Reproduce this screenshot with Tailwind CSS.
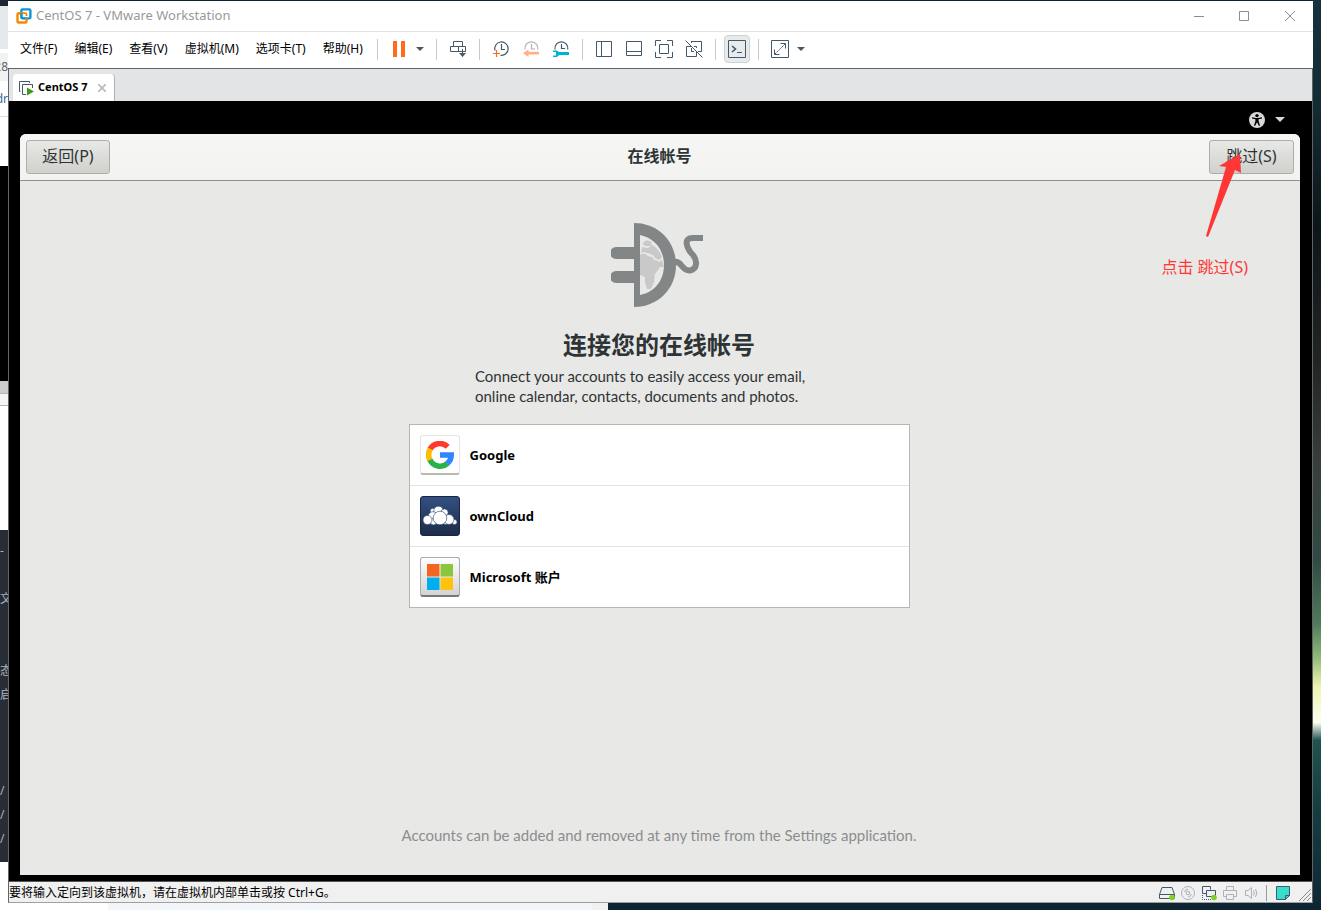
<!DOCTYPE html>
<html lang="zh-CN">
<head>
  <meta charset="UTF-8" />
  <meta name="viewport" content="width=device-width, initial-scale=1" />
  <title>CentOS 7 - VMware Workstation</title>
  <script src="https://cdn.jsdelivr.net/npm/@tailwindcss/browser@4"></script>
</head>
<body class="h-screen overflow-hidden flex flex-col bg-[#0e2430] font-['Noto_Sans','Noto_Sans_CJK_SC',sans-serif] text-xs text-black">

  <div class="flex-1 min-h-0 flex">
    <!-- Windows behind, left edge -->
    <div class="w-2 shrink-0 flex flex-col overflow-hidden bg-white whitespace-nowrap">
      <div class="h-1.5 shrink-0 bg-[#1c2733]"></div>
      <div class="h-[43px] shrink-0 bg-[#e4e9ec]"></div>
      <div class="h-1 shrink-0"></div>
      <div class="h-7 shrink-0 flex justify-end items-center bg-[#f1f3f3] text-xs text-[#5f6368]">28</div>
      <div class="h-9 shrink-0 flex justify-end items-center text-xs text-[#35699a] border-b border-[#dddddd]">dr</div>
      <div class="h-[49px] shrink-0"></div>
      <div class="h-[215px] shrink-0 bg-black"></div>
      <div class="h-3 shrink-0 bg-[#cccccc]"></div>
      <div class="h-[13px] shrink-0 bg-[#f5f5f5] border-y border-[#b4b4b4]"></div>
      <div class="h-[124px] shrink-0"></div>
      <div class="h-[332px] shrink-0 pt-[9px] bg-[#282c34] text-[#abb2bf] text-xs leading-6">
        <p>-</p><p>&nbsp;</p><p>文</p><p>&nbsp;</p><p>&nbsp;</p><p>态</p><p>启</p>
        <p>&nbsp;</p><p>&nbsp;</p><p>&nbsp;</p><p>/</p><p>/</p><p>/</p>
      </div>
    </div>

    <!-- VMware window -->
    <div class="flex-1 min-w-0 mt-px flex flex-col bg-white">
      <header class="h-[31px] shrink-0 flex items-center pl-2 border-b border-[#e3e3e3]">
        <svg class="w-4 h-4" viewBox="0 0 16 16" fill="none" stroke-width="2.4">
          <rect x="5.4" y="1.4" width="9" height="9" rx="1.2" stroke="#0c95d6" />
          <path d="M5 5.2H2.8Q1.5 5.2 1.5 6.5V13.2Q1.5 14.5 2.8 14.5H9.2Q10.5 14.5 10.5 13.2V10.5" stroke="#f38b00" />
          <path d="M4.5 5.2H9.3Q10.5 5.2 10.5 6.4V8" stroke="#f38b00" stroke-width="1.8" />
          <path d="M5.4 5V9.3Q5.4 10.4 6.5 10.4H9" stroke="#0c95d6" stroke-width="1.8" />
        </svg>
        <h1 class="ml-1 text-[13px] text-[#999999]">CentOS 7 - VMware Workstation</h1>
        <div class="ml-auto flex text-[#8d8d8d]">
          <button aria-label="最小化" class="w-[45px] h-7 grid place-items-center"><svg class="w-3 h-3" viewBox="0 0 12 12" stroke="currentColor"><path d="M1 6.5H11" /></svg></button>
          <button aria-label="最大化" class="w-[46px] h-7 grid place-items-center"><svg class="w-3 h-3" viewBox="0 0 12 12" fill="none" stroke="currentColor"><path d="M1.5 1.5H10.5V10.5H1.5Z" /></svg></button>
          <button aria-label="关闭" class="w-[46px] h-7 grid place-items-center"><svg class="w-3 h-3" viewBox="0 0 12 12" stroke="currentColor"><path d="M1 1L11 11M11 1L1 11" /></svg></button>
        </div>
      </header>

      <!-- Menu + toolbar -->
      <div class="h-9 shrink-0 pb-0.5 flex items-center whitespace-nowrap">
        <nav class="w-[369px] shrink-0 pl-3 pb-px flex gap-[17px]">
          <button>文件(F)</button>
          <button>编辑(E)</button>
          <button>查看(V)</button>
          <button>虚拟机(M)</button>
          <button>选项卡(T)</button>
          <button>帮助(H)</button>
        </nav>
        <div class="flex items-center text-[#44586a]">
          <i class="w-px h-[21px] mr-1.5 bg-[#c8c8c8]"></i>
          <button aria-label="挂起" class="w-[30px] h-7 grid place-items-center"><svg class="w-4 h-4" viewBox="0 0 16 16" fill="#ff6a1c"><path d="M2 0H6V16H2ZM10 0H14V16H10Z" /></svg></button>
          <button aria-label="电源选项" class="w-4 h-7 pr-1 grid place-items-center"><svg class="w-2 h-1" viewBox="0 0 8 4" fill="currentColor"><path d="M0 0H8L4 4Z" /></svg></button>
          <i class="w-px h-[21px] mx-1.5 bg-[#c8c8c8]"></i>
          <button aria-label="发送 Ctrl+Alt+Del" class="w-[30px] h-7 grid place-items-center">
            <svg class="w-[18px] h-[18px]" viewBox="0 0 18 18" fill="none" stroke="currentColor"><path d="M4.5 6.5V1.5H13.5V6.5M9.5 6.5V11.5M1.5 6.5H16.5V11.5H1.5ZM13.5 9V16.5" /><path d="M10 13H17L13.5 17Z" fill="currentColor" stroke="none" /></svg>
          </button>
          <i class="w-px h-[21px] mx-1.5 bg-[#c8c8c8]"></i>
          <button aria-label="拍摄快照" class="w-[30px] h-7 grid place-items-center">
            <svg class="w-[18px] h-[18px]" viewBox="0 0 18 18" fill="none" stroke="currentColor" stroke-width="1.2"><path d="M3 10.5A6.7 6.7 0 1 1 8.5 15.3M9.5 4V9.5H13" /><path d="M1 13.5H8M4.5 10V17" stroke="#ff6a1c" /></svg>
          </button>
          <button aria-label="恢复快照" class="w-[30px] h-7 grid place-items-center">
            <svg class="w-[18px] h-[18px]" viewBox="0 0 18 18" fill="none" stroke="#a9b1b9" stroke-width="1.2"><path d="M3 9.5A6.5 6.5 0 1 1 15.8 9.5M9.5 4V9H13" /><path d="M1 13.2L6.5 9.5V11.8H17V14.6H6.5V17Z" fill="#ffb088" stroke="none" /></svg>
          </button>
          <button aria-label="管理快照" class="w-[30px] h-7 grid place-items-center">
            <svg class="w-[18px] h-[18px]" viewBox="0 0 18 18" fill="none" stroke="currentColor" stroke-width="1.2"><path d="M3 9.5A6.5 6.5 0 1 1 15.8 9.5M9.5 4V8.5H13" /><path d="M1 10.5H5L7 12H17V15H7L5 17H1V15.500H4V12H1Z" fill="#00b2d6" stroke="none" /></svg>
          </button>
          <i class="w-px h-[21px] mx-1.5 bg-[#c8c8c8]"></i>
          <button aria-label="显示库" class="w-[30px] h-7 grid place-items-center"><svg class="w-4 h-4" viewBox="0 0 16 16" fill="none" stroke="currentColor"><path d="M.5 .5H15.5V15.5H.5ZM5.5 .5V15.5" /></svg></button>
          <button aria-label="显示缩略图栏" class="w-[30px] h-7 grid place-items-center"><svg class="w-4 h-4" viewBox="0 0 16 16" fill="none" stroke="currentColor"><path d="M.5 .5H15.5V14.5H.5ZM.5 10.5H15.5" /></svg></button>
          <button aria-label="全屏" class="w-[30px] h-7 grid place-items-center"><svg class="w-[18px] h-[18px]" viewBox="0 0 18 18" fill="none" stroke="currentColor"><path d="M.5 6V.5H6M12 .5H17.5V6M17.5 12V17.5H12M6 17.5H.5V12M4.5 4.5H13.5V13.5H4.5Z" /></svg></button>
          <button aria-label="Unity" class="w-[30px] h-7 grid place-items-center"><svg class="w-[18px] h-[18px]" viewBox="0 0 18 18" fill="none" stroke="currentColor"><path d="M6 1.5H16.5V11.5H13M11.5 8V6.5H9M6 6.5H1.5V16.5H11.5V12M6.5 3V1.5M6.5 8V11.5H9M.5 .5L17.5 17.5" /></svg></button>
          <i class="w-px h-[21px] mx-1.5 bg-[#c8c8c8]"></i>
          <button aria-label="控制台视图" class="w-[26px] h-7 mx-0.5 grid place-items-center rounded border border-[#cfd2d2] bg-[#e8ebeb]"><svg class="w-[18px] h-[18px]" viewBox="0 0 18 18" fill="none" stroke="currentColor"><path d="M.5 .5H17.5V17.5H.5ZM9 12.5H14" /><path d="M4 6L7.500 9L4 12" stroke-width="1.6" /></svg></button>
          <i class="w-px h-[21px] mx-1.5 bg-[#c8c8c8]"></i>
          <button aria-label="自由拉伸" class="w-[30px] h-7 grid place-items-center"><svg class="w-[18px] h-[18px]" viewBox="0 0 18 18" fill="none" stroke="currentColor"><path d="M.5 .5H17.5V17.5H.5ZM9.5 3.5H14.5V8.5M3.5 9.5V14.5H8.5" /><path d="M4 14L14 4" stroke-dasharray="2 1" /></svg></button>
          <button aria-label="拉伸选项" class="w-3 h-7 grid place-items-center"><svg class="w-2 h-1" viewBox="0 0 8 4" fill="currentColor"><path d="M0 0H8L4 4Z" /></svg></button>
        </div>
      </div>

      <!-- Window body -->
      <div class="flex-1 min-h-0 flex flex-col border border-[#636365] border-b-[#a0a0a0]">
        <div class="h-8 shrink-0 flex items-end pl-1 bg-[#e3e4e6]">
          <div class="h-[27px] flex items-center px-1.5 rounded-t bg-white border-r border-[#b0b0b0]">
            <svg class="w-4 h-4" viewBox="0 0 16 16" fill="none" stroke="#44586a"><path d="M1.5 11.5H.5V1.5H10.5V3M7 14.5H3.5V4.5H13.5V8" /><path d="M8 7.5L15 11.5L8 15.5Z" fill="#3f9c12" stroke="none" /></svg>
            <span class="ml-[3px] font-bold text-[11px]">CentOS 7</span>
            <button aria-label="关闭选项卡" class="ml-[9px] w-3 h-3 grid place-items-center"><svg class="w-2 h-2" viewBox="0 0 8 8" stroke="#bbbbbb" stroke-width="1.8"><path d="M0 0L8 8M8 0L0 8" /></svg></button>
          </div>
        </div>

        <!-- Guest screen -->
        <main class="flex-1 min-h-0 flex flex-col pl-[11px] pr-3 pb-1.5 bg-black">
          <div class="h-[33px] shrink-0 flex items-center justify-end gap-2.5 pt-1 pr-[15px]">
            <svg class="w-4 h-4" viewBox="0 0 16 16"><circle cx="8" cy="8" r="8" fill="#d8d8d8" /><circle cx="8" cy="3.6" r="1.7" fill="#000" /><path d="M3 5.3L7 6H9L13 5.3V6.5L9.6 7.2V9L11 13.4L10 14L8 10.2L6 14L5 13.4L6.4 9V7.2L3 6.5Z" fill="#000" /></svg>
            <svg class="w-2.5 h-[5px]" viewBox="0 0 10 5" fill="#d8d8d8"><path d="M0 0H10L5 5Z" /></svg>
          </div>

          <div class="relative flex-1 min-h-0 flex flex-col rounded-t-md bg-[#e8e8e6] text-[#2e3436]">
            <div class="h-[47px] shrink-0 flex items-center justify-between px-1.5 rounded-t-md bg-linear-to-b from-[#f6f6f5] to-[#f2f2f1] border-b border-[#8f908a]">
              <button class="w-[84px] h-[34px] pb-0.5 rounded-[3px] border border-[#adada9] bg-linear-to-b from-[#e8e8e6] to-[#d0d0cd] text-base leading-6">返回(P)</button>
              <h2 class="pb-0.5 text-base leading-6 font-bold">在线帐号</h2>
              <button class="w-[85px] h-[34px] pb-0.5 rounded-[3px] border border-[#adada9] bg-linear-to-b from-[#e8e8e6] to-[#d0d0cd] text-base leading-6">跳过(S)</button>
            </div>

            <div class="flex-1 min-h-0 flex flex-col items-center pt-[41px] pb-[30px] pr-0.5 font-['Lato','Noto_Sans_CJK_SC',sans-serif] text-[15px] leading-5">
              <svg class="w-24 h-[88px] shrink-0" viewBox="22 22 96 88">
                <path d="M51 35C66 38 76 50 76 65S66 92 51 95Z" fill="#e8e8e6" />
                <path d="M54 43Q57 39 60 41L63 42L61 46L56 46L54 44ZM51 54L56 53L59 56L63 57L65 60L69 61L71 67L66 74L65 82L62 89L58 89L56 82V77L51 75ZM65 60L70 62L73 60L75 67L71 67Z" fill="#c9c9c9" />
                <path d="M62 44Q70 49 73 57L70 60L66 58L64 55L59 53L52 53L53 47L58 48L61 47Z" fill="#c9c9c9" />
                <path d="M51 54Q56 51 59 55L64 56" fill="none" stroke="#e8e8e6" stroke-width="1.6" />
                <path fill-rule="evenodd" d="M45 23C69 23 87 41 87 65S69 107 45 107V83H27A6 6 0 0 1 27 71H45V59H27A6 6 0 0 1 27 47H45ZM51 35V95C66 92 75 80 75 65S66 38 51 35Z" fill="#838686" />
                <path d="M85 62C93 60 92 71 101 70.500C109 69 108 60 104 55C98 49 93 37 105 38H114" fill="none" stroke="#838686" stroke-width="6" />
              </svg>
              <h3 class="mt-[17px] text-2xl leading-9 font-bold">连接您的在线帐号</h3>
              <p class="mt-[3px] w-[368px] max-w-full">Connect your accounts to easily access your email,<br />online calendar, contacts, documents and photos.</p>

              <ul class="mt-[18px] w-[501px] max-w-full border border-[#b6b6b3] bg-white divide-y divide-[#e2e2e2] text-black text-[13px] font-bold font-['Noto_Sans','Noto_Sans_CJK_SC',sans-serif]">
                <li>
                  <button class="w-full h-[60px] flex items-center gap-2.5 px-2.5">
                    <span class="w-10 h-10 grid place-items-center rounded-[3px] border border-[#e4e4e2] border-b-2 border-b-[#b9b9b2] bg-white">
                      <svg class="w-7 h-7" viewBox="0 0 28 28" fill="none" stroke-width="5.6">
                        <path d="M4 8.200A11.200 11.200 0 0 1 21.700 5.900" stroke="#ff3a2c" />
                        <path d="M4.300 19.600A11.200 11.200 0 0 1 4.300 7.900" stroke="#fdbc00" />
                        <path d="M21.500 22.300A11.200 11.200 0 0 1 4 19" stroke="#29b24b" />
                        <path d="M14 14H25.200A11.200 11.200 0 0 1 21.300 22.500" stroke="#3186ff" />
                      </svg>
                    </span>
                    <span>Google</span>
                  </button>
                </li>
                <li>
                  <button class="w-full h-[60px] flex items-center gap-2.5 px-2.5">
                    <span class="w-10 h-10 grid place-items-center rounded-[3px] border border-[#17253f] bg-linear-to-b from-[#335083] to-[#1c2c49]">
                      <svg class="w-[34px] h-5" viewBox="0 0 34 20" fill="#fff" stroke="#2a4069" stroke-width=".6">
                        <circle cx="10" cy="5" r="2.800" /><circle cx="15.500" cy="5" r="4.800" /><circle cx="21.500" cy="6.500" r="3.600" />
                        <circle cx="31.500" cy="16" r="2.500" /><circle cx="10" cy="10.500" r="4.800" /><circle cx="10.500" cy="15.500" r="3.400" /><circle cx="22.500" cy="15.500" r="3" />
                        <circle cx="4.500" cy="14" r="4.500" /><circle cx="26" cy="13.500" r="5" /><circle cx="17" cy="12" r="6.800" />
                      </svg>
                    </span>
                    <span>ownCloud</span>
                  </button>
                </li>
                <li>
                  <button class="w-full h-[60px] flex items-center gap-2.5 px-2.5">
                    <span class="w-10 h-10 grid place-items-center rounded-[3px] border border-[#aaaaaa] border-b-2 border-b-[#777777] bg-linear-to-b from-white to-[#d3d3d3]">
                      <svg class="w-[26px] h-[26px]" viewBox="0 0 26 26"><path d="M0 0H12.500V12.500H0Z" fill="#f56522" /><path d="M13.500 0H26V12.500H13.500Z" fill="#8cc63f" /><path d="M0 13.500H12.500V26H0Z" fill="#00adef" /><path d="M13.500 13.500H26V26H13.500Z" fill="#ffc20e" /></svg>
                    </span>
                    <span>Microsoft 账户</span>
                  </button>
                </li>
              </ul>

              <p class="mt-auto text-[#8b8e8f]">Accounts can be added and removed at any time from the Settings application.</p>
            </div>

            <!-- Annotation over the guest screen -->
            <svg class="absolute top-5 right-14 w-10 h-[84px]" viewBox="0 0 40 84" fill="#ff3636"><path d="M36 0L37 19L31 16L4 83L2 82L22 13L15 12Z" /></svg>
            <p class="absolute top-[121px] right-[52px] text-base leading-6 text-[#ff3636]">点击 跳过(S)</p>
          </div>
        </main>

        <!-- Status bar -->
        <footer class="h-[21px] shrink-0 pt-0.5 flex items-center border-t border-[#555555] bg-[#f0f0f0]">
          <span>要将输入定向到该虚拟机，请在虚拟机内部单击或按 Ctrl+G。</span>
          <div class="ml-auto flex items-center gap-[5px] pr-px text-[#44586a]">
            <svg class="w-4 h-4" viewBox="0 0 16 16" fill="none" stroke="currentColor"><path d="M3 2.500H13L15.500 9.500V13.500H.5V9.500ZM.5 9.500H15.500" /><circle cx="13" cy="12.500" r="2.800" fill="#7ed321" stroke="none" /></svg>
            <svg class="w-4 h-4" viewBox="0 0 16 16" fill="none" stroke="#a9b1b9"><circle cx="8" cy="8" r="6.500" /><circle cx="8" cy="8" r="1.800" /><path d="M8 4A4 4 0 0 0 4.500 7M8 12A4 4 0 0 0 11.500 9" /></svg>
            <svg class="w-4 h-4" viewBox="0 0 16 16" fill="none" stroke="currentColor"><path d="M5 8.500H1.500V1.500H9.500V4.500M5.500 5.500H14.500V11.500H5.500Z" /><path d="M1.500 10V14.500H11" stroke-dasharray="1 1" /><circle cx="13" cy="12.500" r="2.800" fill="#7ed321" stroke="none" /></svg>
            <svg class="w-4 h-4" viewBox="0 0 16 16" fill="none" stroke="#a9b1b9"><path d="M4.500 5.500V1.500H11.500V5.500M4 11.500H1.500V5.500H14.500V11.500H12M4.500 9.500H11.500V14.500H4.500Z" /></svg>
            <svg class="w-4 h-4" viewBox="0 0 16 16" fill="none" stroke="#a9b1b9"><path d="M2.500 5.500H5L8.500 2.500V13.500L5 10.500H2.500ZM10.500 5.500Q12 8 10.500 10.500M12.500 4Q15 8 12.500 12" /></svg>
            <i class="w-px h-4 ml-0.5 bg-[#9a9a9a]"></i>
            <svg class="w-3.5 h-3.5 ml-1" viewBox="0 0 14 14" fill="#34e0cb" stroke="#44586a"><path d="M.5 .5H13.500V9.500L9.500 13.500H.5Z" /><path d="M9.500 13.500V9.500H13.500" fill="none" /></svg>
            <svg class="w-3 h-3 ml-1 self-end" viewBox="0 0 12 12" stroke="#8a8a8a"><path d="M0 12L12 0M4 12L12 4M8 12L12 8" /></svg>
          </div>
        </footer>
      </div>
    </div>

    <!-- Wallpaper, right edge -->
    <div class="w-2 shrink-0 bg-[linear-gradient(#16323f_0%,#132b33_12%,#0c161a_25%,#222424_40%,#39403c_52%,#304a45_62%,#4f7a5a_69%,#94bd7c_73%,#eef5b0_76%,#fdfff0_80%,#1f5350_82%,#153f41_89%,#0f2836_100%)]"></div>
  </div>

  <!-- Windows behind, bottom edge -->
  <div class="h-[7px] shrink-0 flex">
    <div class="w-[108px] bg-white"></div>
    <div class="w-[484px] bg-[#f2f5f9]"></div>
    <div class="w-4 bg-[#f0f0f0]"></div>
  </div>
</body>
</html>
